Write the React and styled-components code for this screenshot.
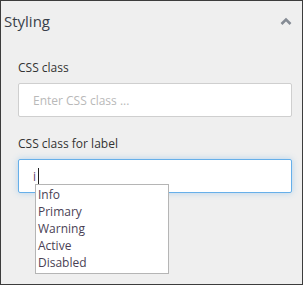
import React from 'react';
import styled, { createGlobalStyle } from 'styled-components';

const GlobalStyle = createGlobalStyle`
  html, body {
    margin: 0;
    padding: 0;
    background: #ffffff;
  }
  * {
    box-sizing: border-box;
  }
`;

const Panel = styled.div`
  width: 303px;
  height: 285px;
  border: 1px solid #3c3c3c;
  background: #efefef;
  font-family: "Open Sans", "Liberation Sans", sans-serif;
  color: #333;
  overflow: hidden;
`;

const Header = styled.div`
  display: flex;
  align-items: center;
  justify-content: space-between;
  height: 42px;
  padding: 0 10px 2px 3px;
`;

const Title = styled.h3`
  margin: 0;
  font-size: 15px;
  font-weight: 400;
  color: #3a3f4a;
`;

const Body = styled.div`
  display: flex;
  flex-direction: column;
  padding: 16px 10px 0 17px;
`;

const Field = styled.div`
  display: flex;
  flex-direction: column;
  margin-bottom: ${(p) => p.gap || 0}px;
`;

const Label = styled.label`
  font-size: 12px;
  line-height: 17px;
  margin-bottom: 7px;
  color: #333;
`;

const InputWrap = styled.div`
  position: relative;
`;

const Input = styled.div`
  height: 34px;
  background: #fff;
  border: 1px solid ${(p) => (p.focused ? '#66afe9' : '#cfcfcf')};
  border-radius: 2px;
  box-shadow: ${(p) =>
    p.focused ? '0 0 6px rgba(102, 175, 233, 0.45)' : 'none'};
  padding: 0 14px;
  display: flex;
  align-items: center;
  font-size: 12px;
  color: #5a3f68;
`;

const Placeholder = styled.span`
  color: #b9b9b9;
`;

const Caret = styled.span`
  display: inline-block;
  width: 1px;
  height: 16px;
  background: #222;
  margin-left: 2px;
`;

const Suggestions = styled.ul`
  position: absolute;
  left: 17px;
  top: 25px;
  width: 134px;
  margin: 0;
  padding: 1px 0 2px 2px;
  list-style: none;
  background: #fff;
  border: 1px solid #b5b5b5;
  font-size: 12px;
  line-height: 17px;
  color: #4a3f55;
`;

const Chevron = () => (
  <svg width="12" height="9" viewBox="0 0 12 9">
    <path d="M1.5 7 L6 2.5 L10.5 7" fill="none" stroke="#858b94" strokeWidth="2.6" />
  </svg>
);

const options = ['Info', 'Primary', 'Warning', 'Active', 'Disabled'];

export default function App() {
  return (
    <>
      <GlobalStyle />
      <Panel>
        <Header>
          <Title>Styling</Title>
          <Chevron />
        </Header>
        <Body>
          <Field gap={18}>
            <Label>CSS class</Label>
            <Input>
              <Placeholder>Enter CSS class ...</Placeholder>
            </Input>
          </Field>
          <Field>
            <Label>CSS class for label</Label>
            <InputWrap>
              <Input focused>
                i<Caret />
              </Input>
              <Suggestions>
                {options.map((o) => (
                  <li key={o}>{o}</li>
                ))}
              </Suggestions>
            </InputWrap>
          </Field>
        </Body>
      </Panel>
    </>
  );
}
